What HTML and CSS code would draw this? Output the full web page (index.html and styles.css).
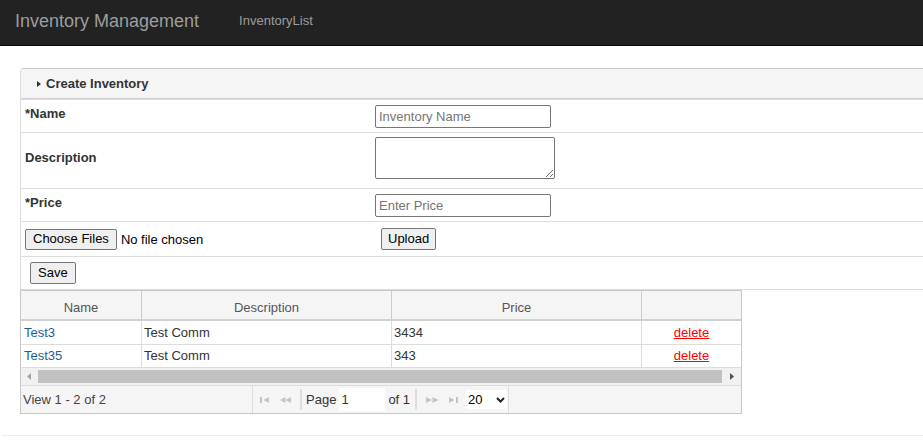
FILE: index.html
```html
<!DOCTYPE html>
<html>
<head>
<meta charset="utf-8">
<title>Inventory Management</title>
<link rel="stylesheet" href="styles.css">
</head>
<body>
<div class="page">
  <nav class="navbar">
    <a class="brand" href="#">Inventory Management</a>
    <a class="nav-link" href="#">InventoryList</a>
  </nav>
  <main class="container">
    <section class="panel">
      <div class="panel-heading"><span class="caret"></span>Create Inventory</div>
      <div class="form-row row-name">
        <div class="cell-label"><label>*Name</label></div>
        <div class="cell-field"><input class="text-input" type="text" placeholder="Inventory Name"></div>
      </div>
      <div class="form-row row-desc">
        <div class="cell-label"><label>Description</label></div>
        <div class="cell-field"><textarea class="text-area"></textarea></div>
      </div>
      <div class="form-row row-price">
        <div class="cell-label"><label>*Price</label></div>
        <div class="cell-field"><input class="text-input" type="text" placeholder="Enter Price"></div>
      </div>
      <div class="form-row row-file">
        <div class="cell-label file-cell"><button class="btn btn-choose" type="button">Choose Files</button><span class="file-status">No file chosen</span></div>
        <div class="cell-field"><button class="btn btn-upload" type="button">Upload</button></div>
      </div>
      <div class="form-row row-save">
        <button class="btn btn-save" type="button">Save</button>
      </div>
    </section>

    <section class="grid">
      <div class="grid-row grid-head">
        <div class="gcell">Name</div>
        <div class="gcell">Description</div>
        <div class="gcell">Price</div>
        <div class="gcell"></div>
      </div>
      <div class="grid-row grid-data">
        <div class="gcell name-cell">Test3</div>
        <div class="gcell">Test Comm</div>
        <div class="gcell">3434</div>
        <div class="gcell action-cell"><a href="#" class="delete-link">delete</a></div>
      </div>
      <div class="grid-row grid-data">
        <div class="gcell name-cell">Test35</div>
        <div class="gcell">Test Comm</div>
        <div class="gcell">343</div>
        <div class="gcell action-cell"><a href="#" class="delete-link">delete</a></div>
      </div>
      <div class="hscroll">
        <div class="sb-btn sb-left"><svg width="4" height="7" viewBox="0 0 4 7"><polygon points="4,0 0,3.5 4,7" fill="#a3a3a3"/></svg></div>
        <div class="sb-thumb"></div>
        <div class="sb-btn sb-right"><svg width="4" height="7" viewBox="0 0 4 7"><polygon points="0,0 4,3.5 0,7" fill="#505050"/></svg></div>
      </div>
      <div class="pager">
        <div class="pager-left">View 1 - 2 of 2</div>
        <div class="pager-center">
          <span class="pg-icon pg-first"><svg width="9" height="6" viewBox="0 0 9 6"><rect x="0" y="0" width="2" height="6" fill="#c4c4c4"/><polygon points="9,0 3.5,3 9,6" fill="#c4c4c4"/></svg></span>
          <span class="pg-icon pg-prev"><svg width="11" height="6" viewBox="0 0 11 6"><polygon points="5.5,0 0,3 5.5,6" fill="#c4c4c4"/><polygon points="11,0 5.5,3 11,6" fill="#c4c4c4"/></svg></span>
          <span class="pg-sep sep-a"></span>
          <span class="pg-text pg-page">Page</span>
          <span class="pg-input">1</span>
          <span class="pg-text pg-of">of 1</span>
          <span class="pg-sep sep-b"></span>
          <span class="pg-icon pg-next"><svg width="13" height="6" viewBox="0 0 13 6"><polygon points="0,0 6,3 0,6" fill="#c4c4c4"/><polygon points="6.5,0 12.5,3 6.5,6" fill="#c4c4c4"/></svg></span>
          <span class="pg-icon pg-last"><svg width="9" height="6" viewBox="0 0 9 6"><polygon points="0,0 5.5,3 0,6" fill="#c4c4c4"/><rect x="7" y="0" width="2" height="6" fill="#c4c4c4"/></svg></span>
          <span class="pg-select">20<svg class="chev" width="9" height="6" viewBox="0 0 9 6"><polyline points="1,1 4.5,4.5 8,1" fill="none" stroke="#222" stroke-width="2"/></svg></span>
        </div>
        <div class="pager-right"></div>
      </div>
    </section>
    <div class="footer-rule"></div>
  </main>
</div>
</body>
</html>
```

FILE: styles.css
```css
html, body {
  margin: 0;
  padding: 0;
  background: #fff;
}

body {
  font-family: "Liberation Sans", Arial, sans-serif;
  font-size: 13px;
  color: #333;
}

.page {
  width: 923px;
  overflow: hidden;
}

/* Navbar */
.navbar {
  display: flex;
  align-items: flex-start;
  height: 45px;
  background: #222;
  border-bottom: 1px solid #080808;
}

.brand {
  margin-left: 15px;
  padding-top: 11px;
  font-size: 18px;
  line-height: 20px;
  color: #9d9d9d;
  text-decoration: none;
}

.nav-link {
  margin-left: 40px;
  padding-top: 11px;
  font-size: 13px;
  line-height: 19px;
  color: #9d9d9d;
  text-decoration: none;
}

/* Container */
.container {
  display: block;
  padding-top: 22px;
  padding-left: 20px;
}

/* Panel */
.panel {
  width: 1300px;
  border: 1px solid #ddd;
  border-top-color: #c8c8c8;
  border-radius: 4px 0 0 0;
}

.panel-heading {
  display: flex;
  align-items: center;
  height: 29px;
  padding-left: 16px;
  background: #f5f5f5;
  border-bottom: 1px solid #cfcfcf;
  border-radius: 3px 0 0 0;
  font-weight: bold;
  line-height: 29px;
}

.caret {
  display: inline-block;
  width: 0;
  height: 0;
  border-left: 4px solid #333;
  border-top: 3.5px solid transparent;
  border-bottom: 3.5px solid transparent;
  margin-right: 5px;
}

.form-row {
  display: flex;
  align-items: center;
  padding-left: 4px;
  border-top: 1px solid #ddd;
}

.row-name, .row-price, .row-save { height: 32px; }
.row-desc { height: 55px; }
.row-file { height: 34px; }

.cell-label {
  width: 350px;
  display: flex;
  align-items: center;
}

.cell-label label {
  display: inline-block;
  font-weight: bold;
  line-height: 15px;
  margin-bottom: 6px;
}

.cell-field {
  display: flex;
  align-items: center;
}

.text-input {
  box-sizing: border-box;
  width: 176px;
  height: 23px;
  margin: 0;
  padding: 0 3px;
  border: 1px solid #767676;
  border-radius: 2px;
  font-family: "Liberation Sans", Arial, sans-serif;
  font-size: 13px;
  color: #333;
}

.text-input::placeholder {
  color: #757575;
}

.text-area {
  box-sizing: border-box;
  display: block;
  width: 180px;
  height: 42px;
  margin: 0 0 5px 0;
  padding: 2px;
  border: 1px solid #767676;
  border-radius: 2px;
  font-family: "Liberation Sans", Arial, sans-serif;
  font-size: 13px;
}

.btn {
  box-sizing: border-box;
  height: 22px;
  margin: 0;
  padding: 0 7px;
  background: #efefef;
  border: 1px solid #767676;
  border-radius: 2px;
  font-family: "Liberation Sans", Arial, sans-serif;
  font-size: 13px;
  line-height: 18px;
  color: #000;
}

.btn-choose {
  height: 21px;
}

.file-status {
  margin-left: 4px;
  color: #000;
}

.btn-upload {
  margin-left: 6px;
  padding: 0 6px;
}

.btn-save {
  margin-left: 5px;
}

/* Grid */
.grid {
  width: 720px;
  border: 1px solid #c8c8c8;
  box-shadow: 0 0 1px rgba(0,0,0,0.08);
}

.grid-row {
  display: grid;
  grid-template-columns: 121px 250px 250px 99px;
}

.gcell {
  box-sizing: border-box;
  border-right: 1px solid #ddd;
  white-space: nowrap;
  overflow: hidden;
}

.gcell:last-child {
  border-right: none;
}

.grid-head {
  height: 30px;
  background: #f5f5f5;
  border-bottom: 2px solid #d0d0d0;
  box-sizing: border-box;
  height: 30px;
}

.grid-head .gcell {
  height: 28px;
  padding-top: 9px;
  line-height: 15px;
  text-align: center;
  color: #555;
  border-right-color: #ccc;
}

.grid-data {
  border-bottom: 1px solid #ddd;
}

.grid-data .gcell {
  height: 23px;
  line-height: 23px;
  padding-left: 2px;
  color: #333;
}

.grid-data + .grid-data .gcell {
  height: 22px;
  line-height: 22px;
}

.grid-data .name-cell {
  padding-left: 3px;
  color: #1c5e9a;
}

.grid-data .action-cell {
  text-align: center;
  padding-left: 0;
}

.delete-link {
  color: #f00;
  text-decoration: underline;
}

/* Horizontal scrollbar */
.hscroll {
  display: flex;
  height: 17px;
  background: #f1f1f1;
}

.sb-btn {
  display: flex;
  align-items: center;
  justify-content: center;
}

.sb-left { width: 16px; }
.sb-right { width: 18px; }

.sb-thumb {
  flex: 1;
  margin: 2px 1px 2px 1px;
  background: #c1c1c1;
}

/* Pager */
.pager {
  display: grid;
  grid-template-columns: 231px 257px 1fr;
  height: 27px;
  border-top: 1px solid #ddd;
  background: #f5f5f5;
}

.pager-left {
  padding-left: 2px;
  line-height: 27px;
  color: #444;
}

.pager-center {
  display: flex;
  align-items: center;
  padding-left: 7px;
  border-left: 1px solid #ddd;
  border-right: 1px solid #ddd;
}

.pg-icon {
  display: flex;
  align-items: center;
}

.pg-prev { margin-left: 11px; }
.pg-next { margin-left: 9px; }
.pg-last { margin-left: 10px; }

.pg-sep {
  width: 2px;
  height: 21px;
  background: #dedede;
}

.sep-a { margin-left: 9px; }
.sep-b { margin-left: 5px; }

.pg-text {
  color: #333;
  line-height: 15px;
}

.pg-page { margin-left: 4px; }
.pg-of { margin-left: 3px; }

.pg-input {
  box-sizing: border-box;
  width: 46px;
  height: 23px;
  margin-left: 3px;
  padding-left: 2px;
  background: #fff;
  line-height: 23px;
  color: #333;
}

.pg-select {
  display: flex;
  align-items: center;
  box-sizing: border-box;
  width: 42px;
  height: 19px;
  margin-left: 7px;
  padding-left: 3px;
  background: #fff;
  border-radius: 3px;
  color: #000;
}

.chev {
  margin-left: 13px;
}

.footer-rule {
  margin: 21px 0 0 -18px;
  border-top: 1px solid #eee;
  height: 0;
}
```
